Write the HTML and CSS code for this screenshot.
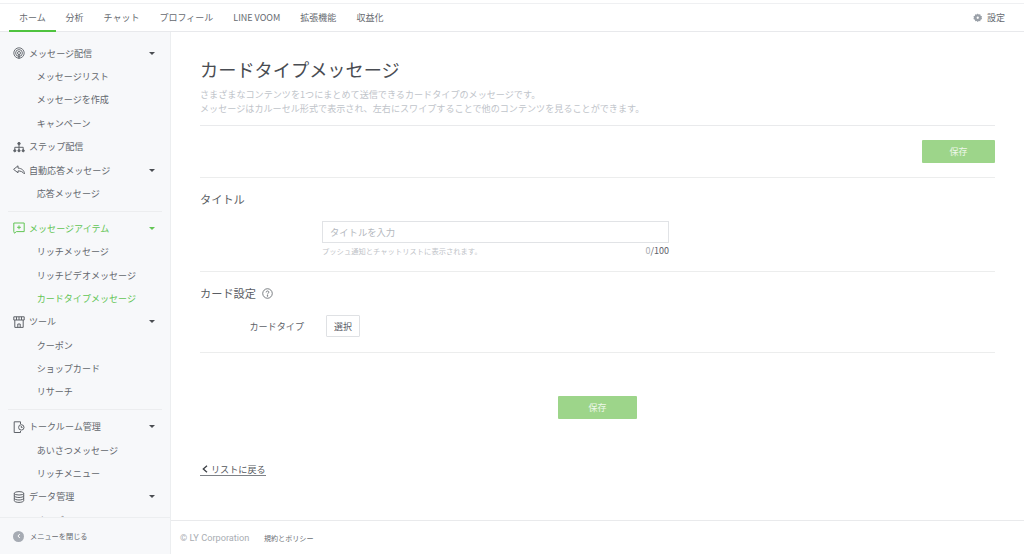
FILE: index.html
```html
<!DOCTYPE html>
<html lang="ja">
<head>
<meta charset="utf-8">
<title>カードタイプメッセージ</title>
<link rel="stylesheet" href="styles.css">
</head>
<body>
<div class="page">
  <header class="topbar">
    <nav class="tabs">
      <a class="tab tab-active">ホーム</a>
      <a class="tab">分析</a>
      <a class="tab">チャット</a>
      <a class="tab">プロフィール</a>
      <a class="tab">LINE VOOM</a>
      <a class="tab">拡張機能</a>
      <a class="tab">収益化</a>
    </nav>
    <a class="settings">
      <svg class="gear" viewBox="0 0 10 10"><path d="M5 .4l1 1.3 1.6-.3.4 1.6 1.6.6-.6 1.4.6 1.4-1.6.6-.4 1.6-1.6-.3-1 1.3-1-1.3-1.6.3-.4-1.6L.4 6.400 1 5 .4 3.600 2 3l.4-1.600 1.600.3z" fill="#9aa0a8"/><circle cx="5" cy="5" r="1.200" fill="#fff"/></svg>
      設定
    </a>
  </header>
  <div class="body">
    <aside class="sidebar">
      <div class="side-scroll">
        <div class="group">
          <div class="side-head">
            <svg class="side-icon" viewBox="0 0 12 12" fill="none" stroke="#5f6369" stroke-width=".9"><circle cx="6" cy="6" r="5.200"/><circle cx="6" cy="6" r="3.400"/><circle cx="6" cy="6" r="1.500"/><path d="M6 7.200v4.600" stroke-width="1.200"/></svg>
            <span class="side-label">メッセージ配信</span><i class="caret"></i>
          </div>
          <a class="side-item">メッセージリスト</a>
          <a class="side-item">メッセージを作成</a>
          <a class="side-item">キャンペーン</a>
          <div class="side-head">
            <svg class="side-icon" viewBox="0 0 12 12" fill="none" stroke="#5f6369" stroke-width="1"><circle cx="6" cy="2.600" r="1.200" fill="#5f6369"/><path d="M6 3.500v5M1.800 8.500V6.300h8.400v2.200"/><circle cx="1.800" cy="9.700" r="1.100" fill="#5f6369"/><circle cx="6" cy="9.700" r="1.100" fill="#5f6369"/><circle cx="10.200" cy="9.700" r="1.100" fill="#5f6369"/></svg>
            <span class="side-label">ステップ配信</span>
          </div>
          <div class="side-head">
            <svg class="side-icon" viewBox="0 0 12 12" fill="none" stroke="#5f6369" stroke-width="1" stroke-linejoin="round"><path d="M5 1.800.6 5.400 5 8.800V6.900c2.500 0 4.700.8 6.400 3 0-3.600-2.800-5.600-6.400-5.800z"/></svg>
            <span class="side-label">自動応答メッセージ</span><i class="caret"></i>
          </div>
          <a class="side-item">応答メッセージ</a>
        </div>
        <div class="group">
          <div class="side-head side-green">
            <svg class="side-icon" viewBox="0 0 12 12" fill="none" stroke="#62c554" stroke-width="1"><path d="M.8 1h10.400v8.600H3.400L1.500 11.200 .8 9.600z"/><path d="M6 3.400v3.800M4.100 5.300h3.800"/></svg>
            <span class="side-label">メッセージアイテム</span><i class="caret caret-green"></i>
          </div>
          <a class="side-item">リッチメッセージ</a>
          <a class="side-item">リッチビデオメッセージ</a>
          <a class="side-item side-green">カードタイプメッセージ</a>
          <div class="side-head">
            <svg class="side-icon" viewBox="0 0 12 12" fill="none" stroke="#5f6369" stroke-width="1"><path d="M.8.800h10.400v3.200H.8zM1.800 4v7.400h8.400V4M4.800 11.400V8h2.400v3.400M3.500.8V4M6 .8V4M8.500.8V4"/></svg>
            <span class="side-label">ツール</span><i class="caret"></i>
          </div>
          <a class="side-item">クーポン</a>
          <a class="side-item">ショップカード</a>
          <a class="side-item">リサーチ</a>
        </div>
        <div class="group">
          <div class="side-head">
            <svg class="side-icon" viewBox="0 0 12 12" fill="none" stroke="#5f6369" stroke-width="1"><path d="M7.500 3V.8H1.200v10.700h6.300V10"/><circle cx="8.300" cy="6.400" r="2.700"/><path d="M8.300 5v1.500h1.200"/></svg>
            <span class="side-label">トークルーム管理</span><i class="caret"></i>
          </div>
          <a class="side-item">あいさつメッセージ</a>
          <a class="side-item">リッチメニュー</a>
          <div class="side-head">
            <svg class="side-icon" viewBox="0 0 12 12" fill="none" stroke="#5f6369" stroke-width="1"><ellipse cx="6" cy="2.300" rx="4.700" ry="1.700"/><path d="M1.300 2.300v7.400c0 .9 2.100 1.700 4.700 1.700s4.700-.8 4.700-1.700V2.300M1.300 4.800c0 .9 2.100 1.700 4.700 1.700s4.700-.8 4.700-1.700M1.300 7.300c0 .9 2.100 1.700 4.700 1.700s4.700-.8 4.700-1.700"/></svg>
            <span class="side-label">データ管理</span><i class="caret"></i>
          </div>
          <a class="side-item">オーディエンス</a>
        </div>
      </div>
      <div class="side-foot">
        <span class="close-dot"><svg viewBox="0 0 6 6" class="close-chev" fill="none" stroke="#fff" stroke-width="1"><path d="M3.800 1 1.900 3l1.900 2"/></svg></span>
        <span>メニューを閉じる</span>
      </div>
    </aside>
    <div class="main-col">
      <main class="main">
        <h1 class="title">カードタイプメッセージ</h1>
        <p class="desc">さまざまなコンテンツを1つにまとめて送信できるカードタイプのメッセージです。<br>メッセージはカルーセル形式で表示され、左右にスワイプすることで他のコンテンツを見ることができます。</p>
        <div class="save-row"><button class="btn btn-small">保存</button></div>
        <section class="sec sec-title">
          <h2 class="sec-h">タイトル</h2>
          <div class="field">
            <div class="input">タイトルを入力</div>
            <div class="hint-row"><span class="hint">プッシュ通知とチャットリストに表示されます。</span><span class="count"><span class="count-zero">0</span>/100</span></div>
          </div>
        </section>
        <section class="sec sec-card">
          <h2 class="sec-h sec-h-icon">カード設定
            <svg class="help" viewBox="0 0 12 12" fill="none" stroke="#5f6369" stroke-width=".9"><circle cx="6" cy="6" r="5.200"/><path d="M4.500 4.800c0-2 3-2 3-.2 0 1.100-1.500 1-1.500 2.400"/><circle cx="6" cy="8.600" r=".4" fill="#5f6369"/></svg>
          </h2>
          <div class="type-row"><span class="type-label">カードタイプ</span><button class="select-btn">選択</button></div>
        </section>
        <div class="center-save"><button class="btn btn-large">保存</button></div>
        <a class="back"><svg class="back-chev" viewBox="0 0 6 8" fill="none" stroke="#3b3f45" stroke-width="1.300"><path d="M5 .8 1.300 4 5 7.200"/></svg>リストに戻る</a>
      </main>
      <footer class="foot"><span class="copy">© LY Corporation</span><a class="policy">規約とポリシー</a></footer>
    </div>
  </div>
</div>
</body>
</html>
```
FILE: styles.css
```css
* { box-sizing: border-box; }
html, body { margin: 0; height: 100%; }
body {
  font-family: "Noto Sans CJK JP", "Noto Sans", sans-serif;
  background: #fff;
  color: #5d6168;
  overflow: hidden;
}
.page { height: 554px; display: flex; flex-direction: column; padding-top: 3px; }
.topbar {
  height: 29px;
  flex: none;
  display: flex;
  justify-content: space-between;
  align-items: stretch;
  border-top: 1px solid #eff0f2;
  border-bottom: 1px solid #e8e9ec;
  padding: 0 19px 0 9px;
}
.tabs { display: flex; gap: 0; }
.tab {
  font-size: 9px;
  line-height: 27px;
  padding: 0 10px;
  color: #666a70;
  white-space: nowrap;
}
.tab-active { border-bottom: 2px solid #4fc33f; height: 28px; width: 46.500px; padding: 0 10px; }
.settings { display: flex; align-items: center; gap: 4px; font-size: 9px; color: #666a70; }
.gear { width: 9.500px; height: 9.500px; }

.body { flex: 1; display: flex; min-height: 0; }
.sidebar {
  width: 171px;
  flex: none;
  background: #f7f8fa;
  border-right: 1px solid #eceef0;
  display: flex;
  flex-direction: column;
}
.side-scroll { flex: 1; min-height: 0; overflow: hidden; padding: 9.500px 8px 0; }
.group { padding-bottom: 5.500px; margin-bottom: 4.800px; border-bottom: 1px solid #ecedef; }
.group:last-child { border-bottom: 0; }
.side-head, .side-item {
  height: 23.400px;
  display: flex;
  align-items: center;
  font-size: 9.050px;
  color: #63676d;
}
.side-head { padding-left: 4.500px; }
.side-item { padding-left: 28.700px; }
.side-icon { width: 12px; height: 12px; flex: none; margin-right: 4.500px; }
.side-label { flex: 1; white-space: nowrap; }
.caret {
  width: 0; height: 0;
  border-left: 3px solid transparent;
  border-right: 3px solid transparent;
  border-top: 3.500px solid #4a4d52;
  margin-right: 7px;
}
.caret-green { border-top-color: #62c554; }
.side-green, .side-green .side-label { color: #62c554; }
.side-foot {
  height: 37px;
  flex: none;
  border-top: 1px solid #eceef0;
  display: flex;
  align-items: center;
  padding-left: 13px;
  gap: 6px;
  font-size: 7.200px;
  color: #666a70;
}
.close-dot {
  width: 11px; height: 11px;
  border-radius: 50%;
  background: #a6abb3;
  display: flex;
  align-items: center;
  justify-content: center;
}
.close-chev { width: 6px; height: 6px; }

.main-col { flex: 1; min-width: 0; display: flex; flex-direction: column; }
.main { flex: 1; min-height: 0; padding: 0 29px; }
.title {
  margin: 24px 0 0;
  font-size: 18.200px;
  line-height: 26px;
  font-weight: 400;
  color: #494c52;
  white-space: nowrap;
}
.desc {
  margin: 5px 0 0;
  font-size: 9.100px;
  line-height: 14px;
  color: #c0c4ca;
  height: 39px;
  border-bottom: 1px solid #e9eaec;
}
.save-row {
  display: flex;
  justify-content: flex-end;
  padding: 14px 0;
  height: 52px;
  border-bottom: 1px solid #eceded;
}
.btn {
  border: 0;
  border-radius: 1px;
  background: #9dd58a;
  color: #edf7e9;
  font: inherit;
  font-size: 9px;
  padding: 0;
}
.btn-small { width: 73px; height: 23px; }
.btn-large { width: 79px; height: 23px; }
.sec-title { height: 94px; border-bottom: 1px solid #eceded; padding-top: 13px; }
.sec-h {
  margin: 0;
  font-size: 11.200px;
  line-height: 16px;
  font-weight: 400;
  color: #5a5d63;
}
.field { margin: 14px 0 0 122px; width: 347px; }
.input {
  height: 22px;
  border: 1px solid #e1e3e6;
  padding-left: 7px;
  font-size: 9.300px;
  line-height: 20px;
  color: #b4b8be;
}
.hint-row { display: flex; justify-content: space-between; align-items: center; height: 15px; }
.hint { font-size: 7.300px; color: #c0c3c8; }
.count { font-size: 9px; color: #5d6168; }
.count-zero { color: #a9adb3; }
.sec-card { height: 81px; border-bottom: 1px solid #eceded; padding-top: 13px; }
.sec-h-icon { display: flex; align-items: center; gap: 6px; }
.help { width: 11px; height: 11px; }
.type-row { display: flex; align-items: center; margin-top: 14px; }
.type-label { width: 104px; text-align: right; font-size: 9.100px; color: #5d6168; }
.select-btn {
  margin-left: 22px;
  width: 34px;
  height: 22px;
  background: #fff;
  border: 1px solid #dfe1e4;
  border-radius: 1px;
  font: inherit;
  font-size: 9px;
  color: #5d6168;
  padding: 0;
}
.center-save { display: flex; justify-content: center; margin-top: 43px; }
.back {
  display: inline-flex;
  align-items: center;
  gap: 3px;
  margin-top: 44px;
  padding-left: 2px;
  font-size: 9.100px;
  line-height: 12px;
  color: #54575d;
  border-bottom: 1px solid #7d8187;
}
.back-chev { width: 6px; height: 8px; }
.foot {
  height: 34px;
  flex: none;
  border-top: 1px solid #e9eaec;
  display: flex;
  align-items: center;
  padding-left: 9px;
  gap: 14.500px;
  background: #fff;
}
.copy { font-family: Roboto, "Noto Sans", sans-serif; font-size: 9.200px; color: #a9adb3; }
.policy { font-size: 7.100px; color: #6b6f75; }
```
